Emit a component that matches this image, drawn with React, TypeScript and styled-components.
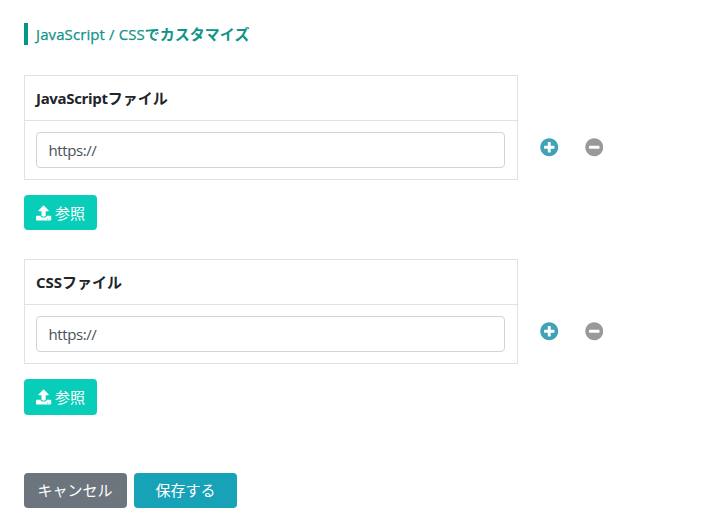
import React from "react";
import styled, { createGlobalStyle } from "styled-components";
import { FaPlusCircle, FaMinusCircle } from "react-icons/fa";

const GlobalStyle = createGlobalStyle`
  *, *::before, *::after { box-sizing: border-box; }
  body {
    margin: 0;
    background: #fff;
    color: #212529;
    font: 400 15px/22px "Open Sans", "Noto Sans CJK JP", sans-serif;
  }
`;

const Page = styled.main`
  padding: 23px 24px 0;
`;

const Title = styled.h1`
  margin: 0 0 30px;
  height: 22px;
  padding-left: 8px;
  border-left: 4px solid #009688;
  color: #109488;
  font-size: 15px;
  line-height: 22px;
  font-weight: 700;
  white-space: nowrap;
`;

const Latin = styled.span<{ $weight: number; $spacing: number; $stroke?: number }>`
  font-weight: ${(p) => p.$weight};
  letter-spacing: ${(p) => p.$spacing}px;
  -webkit-text-stroke: ${(p) => p.$stroke ?? 0}px currentColor;
`;

const Section = styled.section<{ $gap: number }>`
  margin-bottom: ${(p) => p.$gap}px;
`;

const Row = styled.div`
  display: flex;
`;

const Table = styled.div`
  width: 494px;
  height: 105px;
  border: 1px solid #dee2e6;
`;

const Head = styled.div`
  height: 45px;
  padding: 11px;
  border-bottom: 1px solid #dee2e6;
  font-weight: 700;
`;

const Cell = styled.div`
  padding: 11px;
`;

const Input = styled.input`
  display: block;
  width: 469px;
  height: 36px;
  padding: 0 11.5px;
  border: 1px solid #ced4da;
  border-radius: 4px;
  font: inherit;
  letter-spacing: -0.4px;
  color: #495057;
`;

const Actions = styled.div`
  display: flex;
  gap: 26px;
  padding: 63px 0 0 22px;
`;

const IconButton = styled.button<{ $color: string }>`
  display: block;
  padding: 0;
  border: 0;
  width: 18.5px;
  height: 18.5px;
  background: none;
  color: ${(p) => p.$color};
  svg { display: block; }
`;

const Button = styled.button<{ $bg: string; $width: number; $height?: number }>`
  display: flex;
  align-items: center;
  justify-content: center;
  gap: 3px;
  width: ${(p) => p.$width}px;
  height: ${(p) => p.$height ?? 35}px;
  padding: 0 0 1px;
  border: 0;
  border-radius: 4px;
  background: ${(p) => p.$bg};
  color: #fff;
  font: inherit;
`;

const Browse = styled(Button)`
  align-items: flex-start;
  margin-top: 15px;
  padding-top: 7px;
  svg { margin-top: 3px; }
`;

const Cancel = styled(Button)`
  padding-right: 1px;
`;

const Footer = styled.div`
  display: flex;
  gap: 7px;
`;

function UploadIcon() {
  return (
    <svg width="16" height="16" viewBox="0 0 16 16" fill="currentColor" aria-hidden="true">
      <path d="M7.1.8a.7.7 0 0 1 1 0l4.4 4.5c.4.4.1 1-.4 1H9.7v4.3c0 .5-.3.8-.8.8H6.3c-.5 0-.8-.3-.8-.8V6.3H3.1c-.5 0-.8-.6-.4-1z" />
      <path d="M.8 10.8h3.7c.1 1 .8 1.6 1.8 1.6h2.6c1 0 1.7-.6 1.8-1.6h3.7c.5 0 .8.3.8.8v3.1c0 .5-.3.8-.8.8H.8c-.5 0-.8-.3-.8-.8v-3.1c0-.5.3-.8.8-.8zM11 13.8v.7h.8v-.7zm2 0v.7h.8v-.7z" fillRule="evenodd" />
    </svg>
  );
}

interface FileSectionProps {
  prefix: string;
  spacing: number;
  gap: number;
  buttonHeight: number;
}

function FileSection({ prefix, spacing, gap, buttonHeight }: FileSectionProps) {
  return (
    <Section $gap={gap}>
      <Row>
        <Table>
          <Head><Latin $weight={700} $spacing={spacing}>{prefix}</Latin>ファイル</Head>
          <Cell><Input defaultValue="https://" /></Cell>
        </Table>
        <Actions>
          <IconButton $color="#3fa2b6" aria-label="追加"><FaPlusCircle size={18.5} /></IconButton>
          <IconButton $color="#999" aria-label="削除"><FaMinusCircle size={18.5} /></IconButton>
        </Actions>
      </Row>
      <Browse $bg="#08cdb9" $width={73} $height={buttonHeight}><UploadIcon />参照</Browse>
    </Section>
  );
}

export default function App() {
  return (
    <Page>
      <GlobalStyle />
      <Title><Latin $weight={400} $spacing={0.1} $stroke={0.25}>JavaScript / CSS</Latin>でカスタマイズ</Title>
      <FileSection prefix="JavaScript" spacing={-0.33} gap={29} buttonHeight={35} />
      <FileSection prefix="CSS" spacing={0} gap={58} buttonHeight={36} />
      <Footer>
        <Cancel $bg="#6c757d" $width={103}>キャンセル</Cancel>
        <Button $bg="#17a2b8" $width={103}>保存する</Button>
      </Footer>
    </Page>
  );
}
